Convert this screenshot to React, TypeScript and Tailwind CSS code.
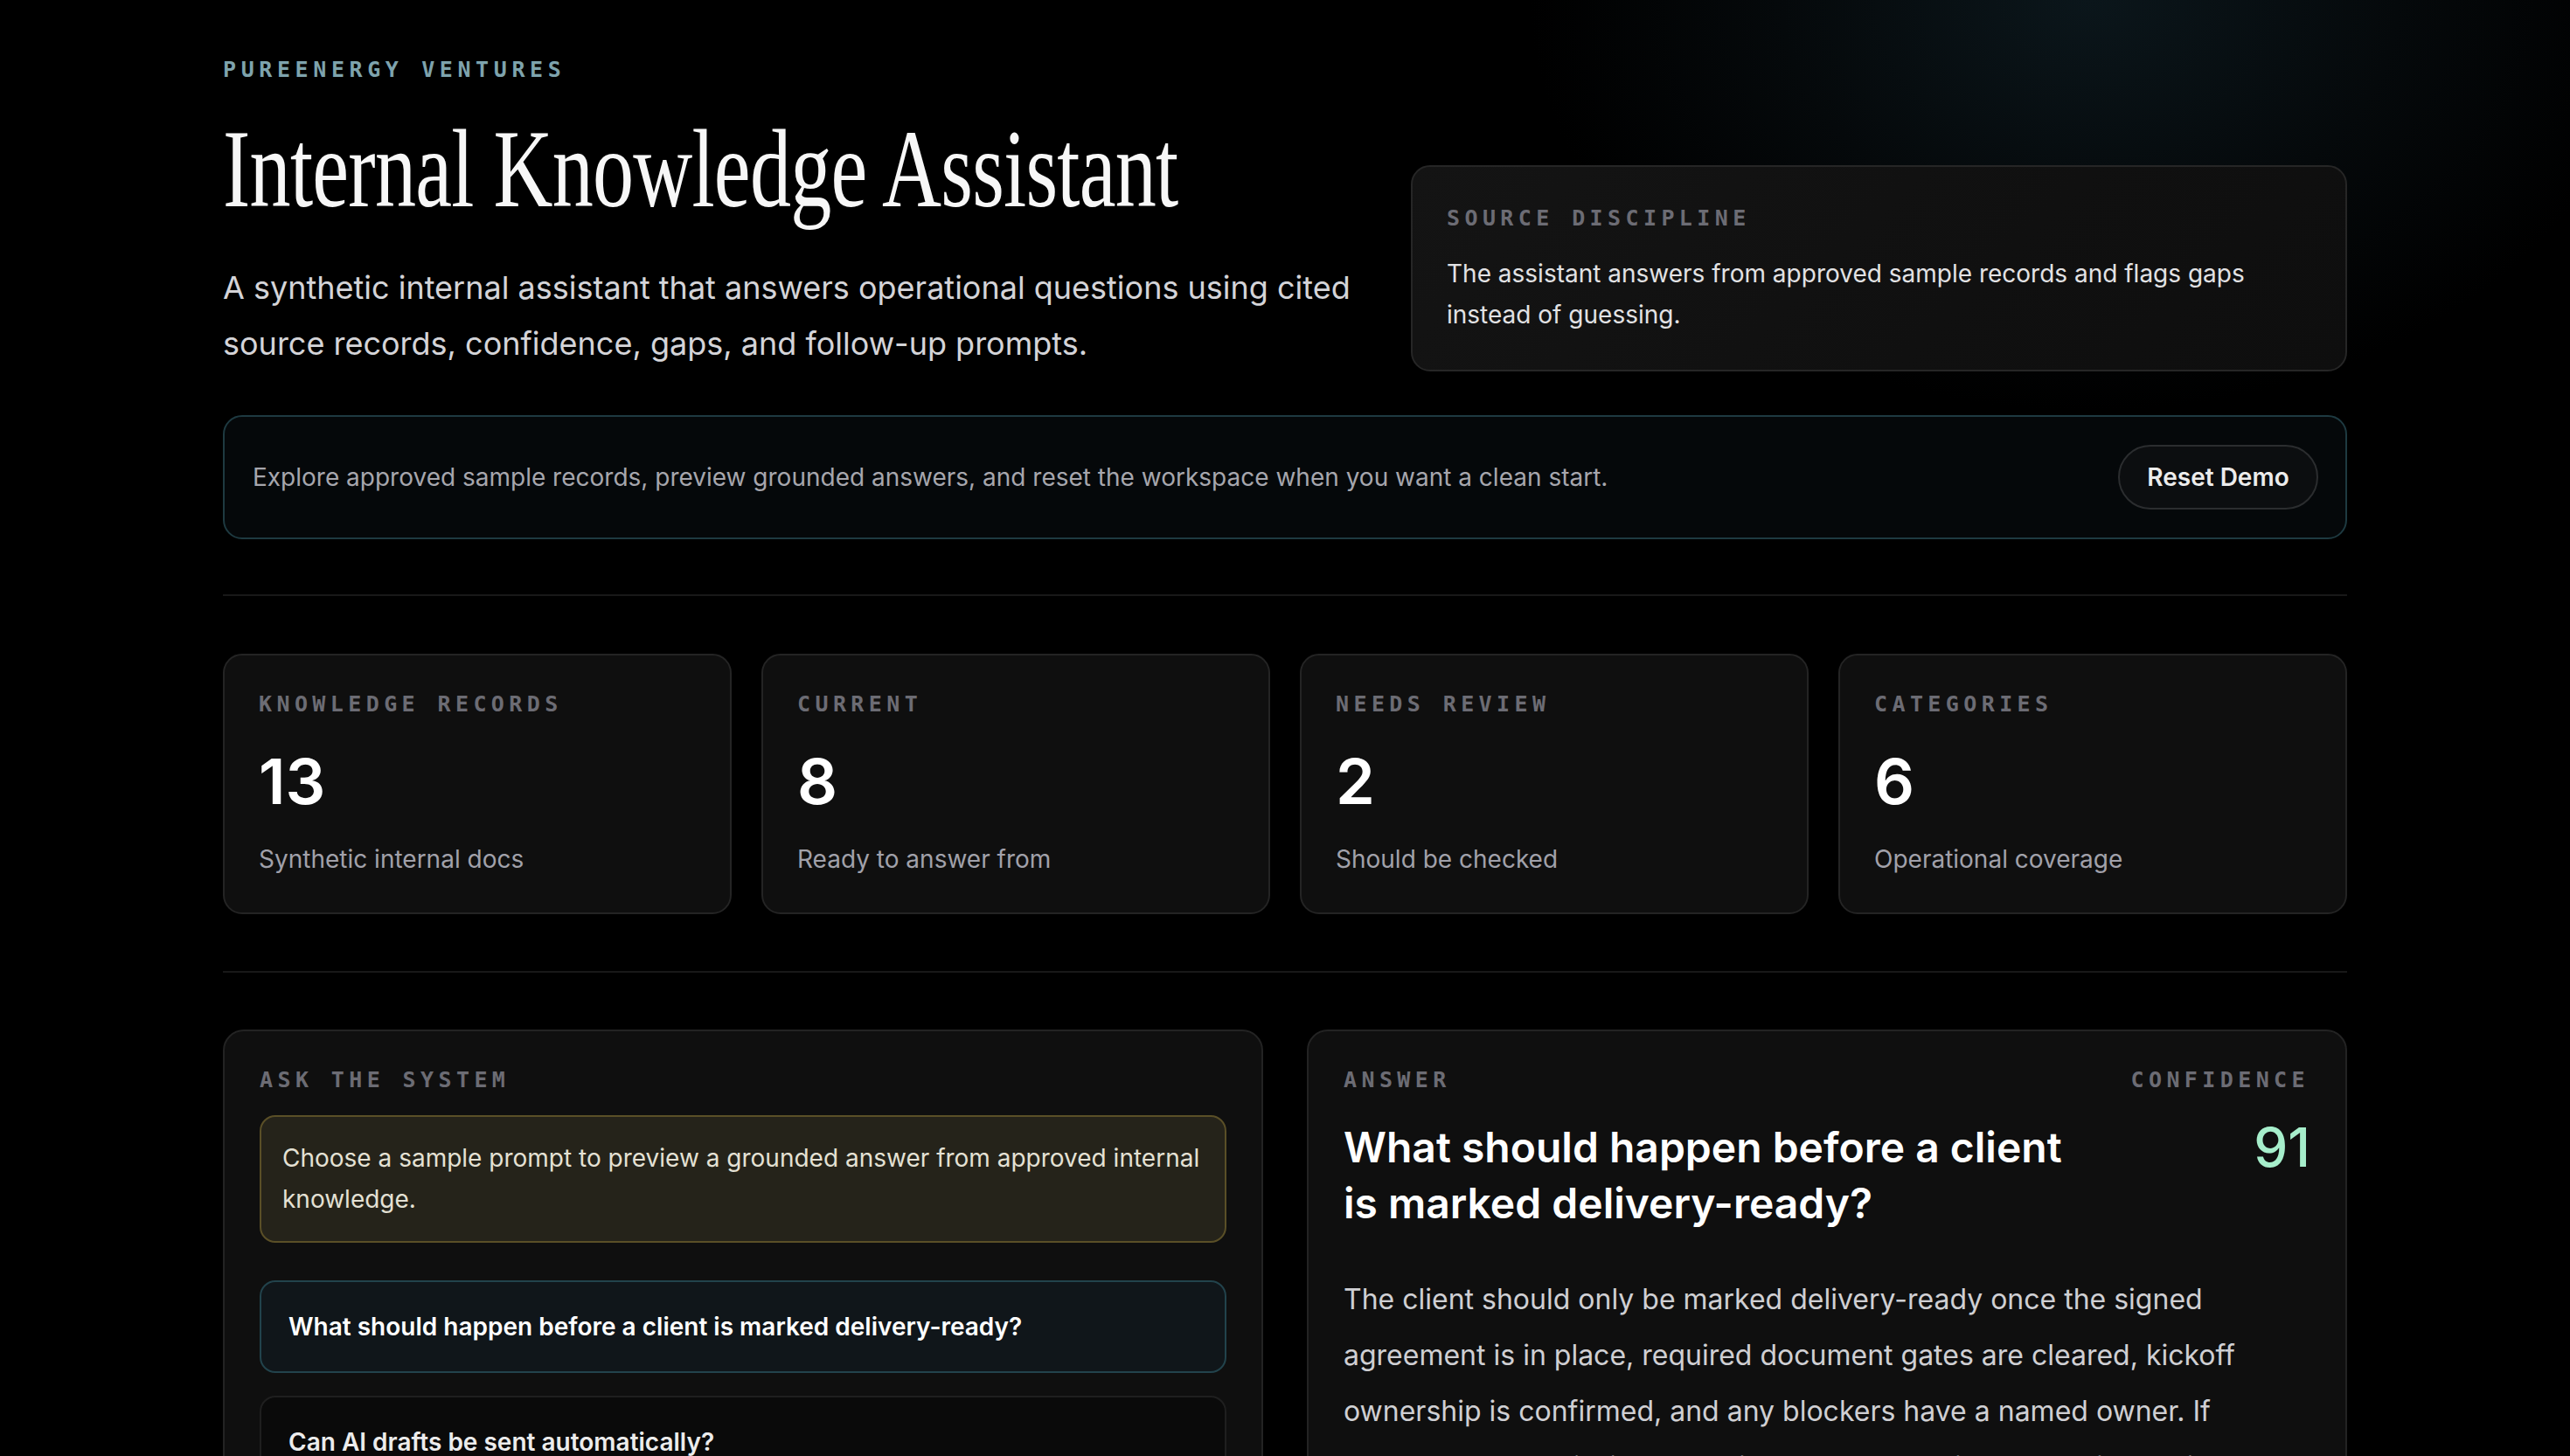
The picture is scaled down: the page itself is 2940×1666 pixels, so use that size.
import React from "react";

const mono = "font-['DejaVu_Sans_Mono','Liberation_Mono',monospace]";

function Label({ children, className = "" }: { children: React.ReactNode; className?: string }) {
  return (
    <div
      className={`${mono} text-[25px] leading-[30px] font-semibold tracking-[5.4px] uppercase text-[#6c6c74] ${className}`}
    >
      {children}
    </div>
  );
}

function StatCard({ label, value, sub }: { label: string; value: string; sub: string }) {
  return (
    <div className="rounded-[22px] border-2 border-[#242424] bg-[#0f0f0f] h-[298px] pl-[39px] pt-[41px]">
      <Label>{label}</Label>
      <div className="mt-[33px] text-[72px] leading-[80px] font-semibold text-white">{value}</div>
      <div className="mt-[29px] text-[28px] leading-[40px] text-[#a1a1aa]">{sub}</div>
    </div>
  );
}

export default function App() {
  return (
    <div className="min-h-screen overflow-hidden bg-black bg-[radial-gradient(640px_470px_at_2390px_0px,#0b161b_0%,#05090b_55%,#000000_100%)] font-['Inter','Noto_Sans',sans-serif] text-white">
      <div className="mx-auto w-[2430px] pt-[65px]">
        {/* Header */}
        <div className="flex items-end gap-[40px]">
          <div className="flex-1 min-w-0">
            <div
              className={`${mono} text-[25px] leading-[30px] font-semibold tracking-[5.6px] text-[#7ea3ad]`}
            >
              PUREENERGY VENTURES
            </div>
            <h1 className="mt-[34px] h-[128px] whitespace-nowrap font-['Liberation_Serif','Times_New_Roman',serif] text-[128px] leading-[128px] font-normal tracking-[-1px] text-[#f7f7f7] origin-left scale-x-[0.735]">
              Internal Knowledge Assistant
            </h1>
            <p className="mt-[40px] whitespace-nowrap text-[36px] leading-[64px] text-[#d4d4d8]">
              A synthetic internal assistant that answers operational questions using cited
              <br />
              source records, confidence, gaps, and follow-up prompts.
            </p>
          </div>
          <div className="w-[1071px] shrink-0 rounded-[22px] border-2 border-[#262626] bg-[linear-gradient(135deg,#141414_0%,#101010_60%,#0e0e0e_100%)] pl-[39px] pt-[44px] pb-[39px]">
            <Label>Source Discipline</Label>
            <p className="mt-[25px] text-[28px] leading-[47px] text-[#e2e2e4]">
              The assistant answers from approved sample records and flags gaps
              <br />
              instead of guessing.
            </p>
          </div>
        </div>

        {/* Banner */}
        <div className="mt-[50px] flex h-[142px] items-center justify-between rounded-[22px] border-2 border-[#1e3a41] bg-[#05080a] pl-[32px] pr-[31px]">
          <p className="text-[28px] leading-[40px] text-[#a6a6ad]">
            Explore approved sample records, preview grounded answers, and reset the workspace when you want a clean start.
          </p>
          <button className="flex h-[74px] w-[229px] items-center justify-center rounded-full border-2 border-[#2b2d2f] bg-[#0c0e10] text-[28px] font-semibold text-[#ececec]">
            Reset Demo
          </button>
        </div>

        <div className="mt-[63px] h-[2px] bg-[#181818]" />

        {/* Stats */}
        <div className="mt-[66px] grid grid-cols-4 gap-[34px]">
          <StatCard label="Knowledge Records" value="13" sub="Synthetic internal docs" />
          <StatCard label="Current" value="8" sub="Ready to answer from" />
          <StatCard label="Needs Review" value="2" sub="Should be checked" />
          <StatCard label="Categories" value="6" sub="Operational coverage" />
        </div>

        <div className="mt-[65px] h-[2px] bg-[#181818]" />

        {/* Bottom panels */}
        <div className="mt-[65px] grid grid-cols-2 gap-[50px]">
          <div className="h-[700px] rounded-[24px] border-2 border-[#232323] bg-[#0f0f0f] px-[40px] pt-[41px]">
            <Label>Ask the System</Label>
            <div className="mt-[25px] rounded-[18px] border-2 border-[#5a4f27] bg-[#25231a] pl-[24px] pr-[20px] pt-[24px] pb-[24px]">
              <p className="text-[28px] leading-[47px] text-[#e4e1d4] whitespace-nowrap">
                Choose a sample prompt to preview a grounded answer from approved internal
                <br />
                knowledge.
              </p>
            </div>
            <div className="mt-[43px] flex flex-col gap-[26px]">
              <button className="h-[106px] rounded-[18px] border-2 border-[#22434c] bg-[#10161a] pl-[31px] text-left text-[28px] leading-[40px] font-semibold text-white">
                What should happen before a client is marked delivery-ready?
              </button>
              <button className="h-[106px] rounded-[18px] border-2 border-[#1f1f1f] bg-[#0a0a0a] pl-[31px] text-left text-[28px] leading-[40px] font-semibold text-[#ececec]">
                Can AI drafts be sent automatically?
              </button>
            </div>
          </div>

          <div className="h-[700px] rounded-[24px] border-2 border-[#232323] bg-[#0f0f0f] pl-[40px] pr-[40px] pt-[41px]">
            <div className="flex items-start justify-between">
              <div>
                <Label>Answer</Label>
                <h2 className="mt-[30px] whitespace-nowrap text-[48px] leading-[64px] font-semibold text-white">
                  What should happen before a client
                  <br />
                  is marked delivery-ready?
                </h2>
              </div>
              <div className="flex flex-col items-end">
                <Label className="mr-[1px]">Confidence</Label>
                <div className="mt-[30px] text-[62px] leading-[64px] font-medium text-[#a6eecb]">91</div>
              </div>
            </div>
            <p className="mt-[46px] w-[1090px] text-[32px] leading-[64px] text-[#cfcfd3]">
              The client should only be marked delivery-ready once the signed agreement is in place, required document gates are cleared, kickoff ownership is confirmed, and any blockers have a named owner. If documents are missing, the client should stay in onboarding until each gap is resolved.
            </p>
          </div>
        </div>
      </div>
    </div>
  );
}
